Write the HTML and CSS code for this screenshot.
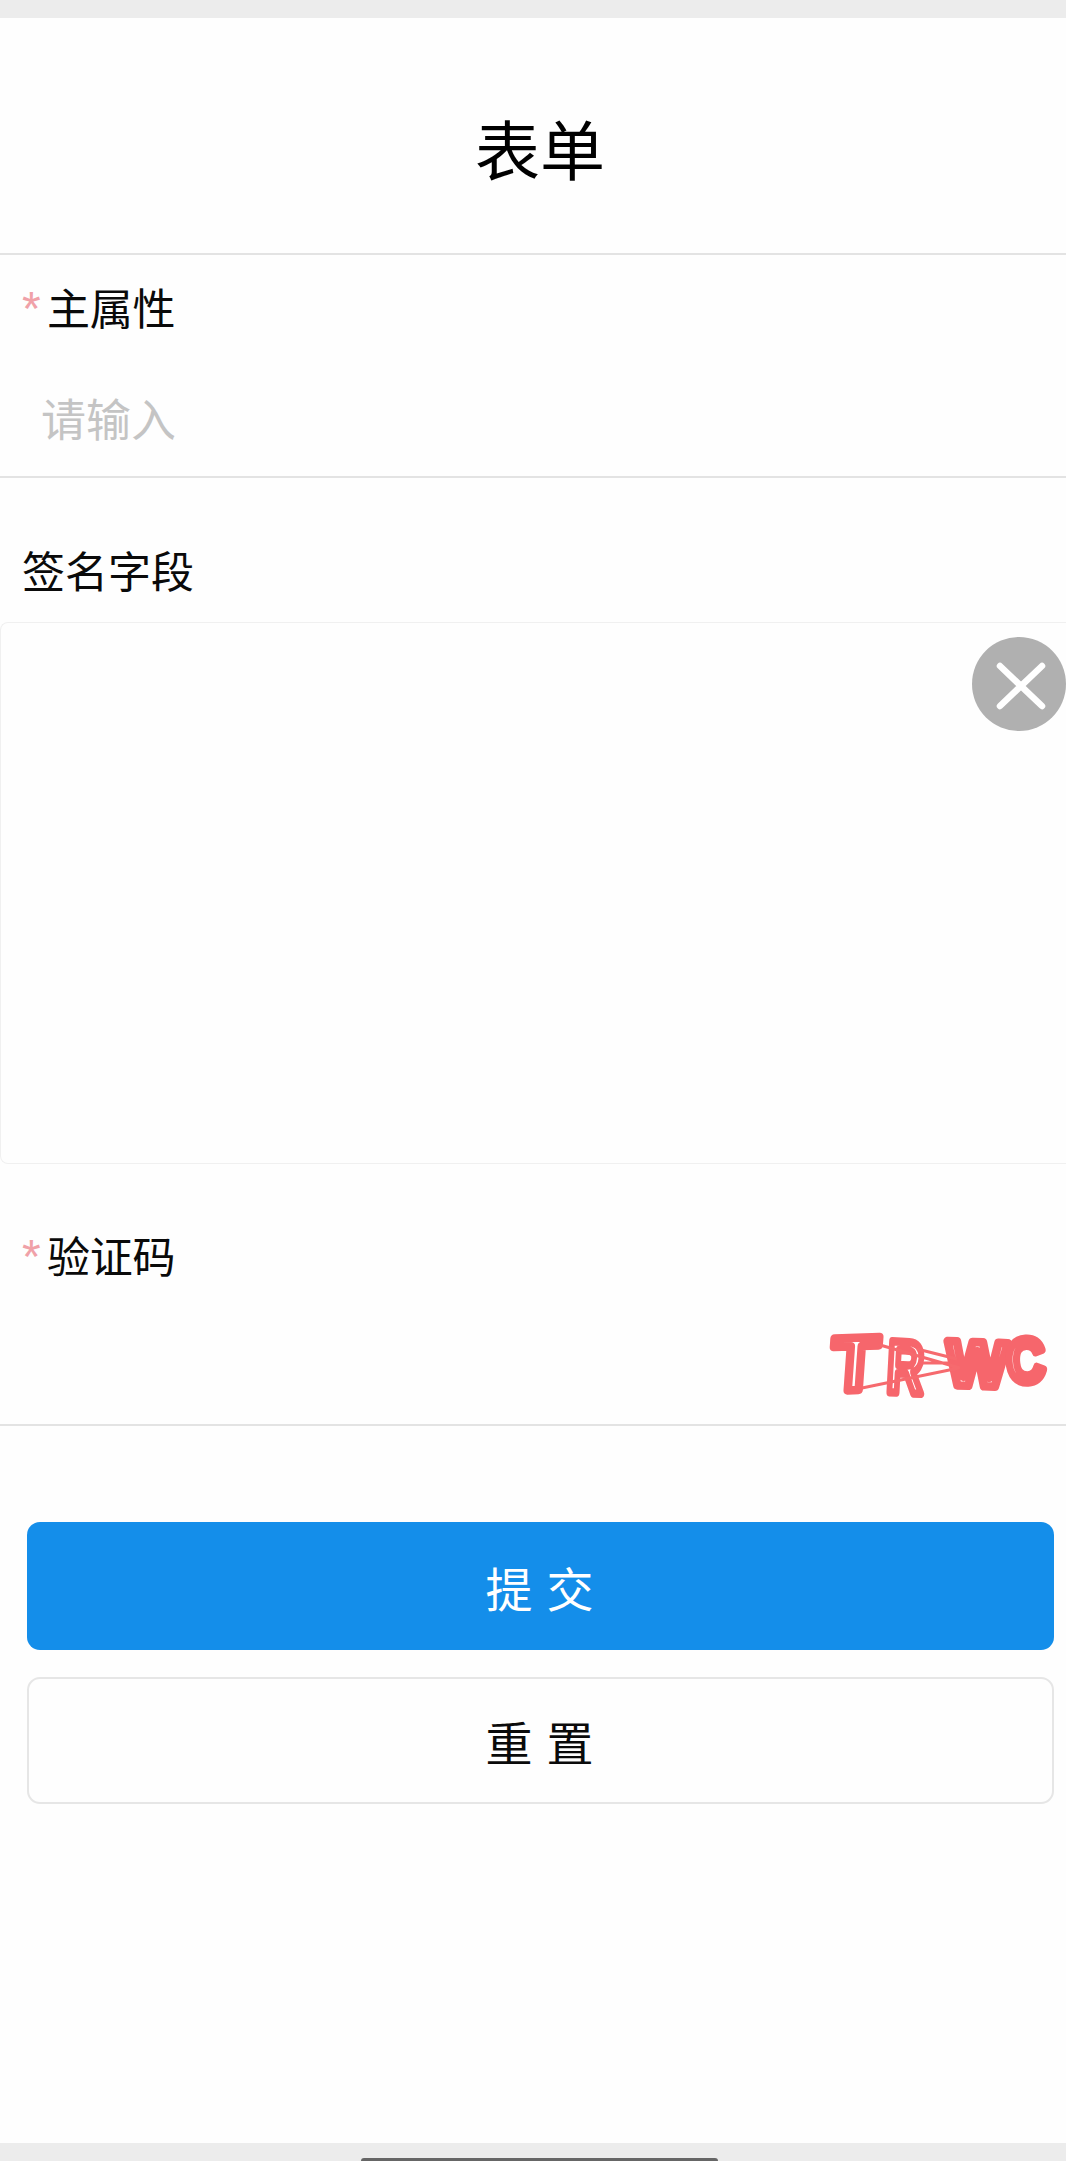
FILE: index.html
```html
<!DOCTYPE html>
<html lang="zh-CN">
<head>
<meta charset="utf-8">
<title>表单</title>
<link rel="stylesheet" href="styles.css">
</head>
<body>
<div class="phone">
  <div class="status-strip"></div>
  <header class="page-title"><h1>表单</h1></header>
  <main class="form">
    <section class="field field-main">
      <label class="field-label" for="attr"><span class="req">*</span>主属性</label>
      <input id="attr" class="text-input" type="text" placeholder="请输入">
    </section>
    <section class="sign">
      <div class="sign-label">签名字段</div>
      <div class="sign-pad">
        <button class="sign-clear" type="button" aria-label="清除">
          <svg viewBox="0 0 94 94" width="94" height="94"><path d="M28 29 L70 69 M70 29 L28 69" stroke="#fff" stroke-width="6.5" stroke-linecap="round" fill="none"/></svg>
        </button>
      </div>
    </section>
    <section class="field field-code">
      <label class="field-label"><span class="req">*</span>验证码</label>
      <div class="captcha-row">
        <svg class="captcha" viewBox="0 0 221 66" width="221" height="66" role="img" aria-label="TRWC">
          <g class="captcha-text">
            <text transform="translate(3 58) rotate(-2) skewX(-6)" font-size="76">T</text>
            <text transform="translate(59 59) rotate(3) scale(.68 1)" font-size="74">R</text>
            <text transform="translate(119 52) rotate(2)" font-size="64">W</text>
            <text transform="translate(181 50) rotate(-3) scale(.84 1)" font-size="62">C</text>
          </g>
          <g class="captcha-lines">
            <path d="M53 12 L133 35 M35 55 L132 35 M90 16 L130 26 M96 30 L122 30"/>
          </g>
        </svg>
      </div>
    </section>
    <div class="actions">
      <button class="btn btn-primary" type="button">提交</button>
      <button class="btn btn-ghost" type="button">重置</button>
    </div>
  </main>
  <div class="home-strip"><div class="home-bar"></div></div>
</div>
</body>
</html>
```
FILE: styles.css
```css
* { box-sizing: border-box; }
html, body { margin: 0; padding: 0; }
body {
  width: 1066px;
  height: 2161px;
  overflow: hidden;
  background: #fefefe;
  font-family: "Noto Sans CJK SC", "Noto Sans", sans-serif;
  color: #0a0a0a;
}
.phone { display: flex; flex-direction: column; height: 2161px; }
.status-strip { height: 18px; background: #ececec; flex: none; }
.page-title {
  height: 237px;
  flex: none;
  display: flex;
  align-items: center;
  justify-content: center;
  padding: 22px 0 0 14px;
  border-bottom: 2px solid #e3e3e3;
}
.page-title h1 { margin: 0; font-size: 65px; font-weight: 400; line-height: 80px; color: #000; }
.form { flex: 1; display: flex; flex-direction: column; }
.field { border-bottom: 2px solid #e3e3e3; padding-left: 22px; flex: none; }
.field-main { height: 223px; padding-top: 23px; }
.field-label { display: flex; align-items: flex-start; font-size: 43px; line-height: 56px; letter-spacing: -0.3px; }
.req {
  width: 25px;
  height: 56px;
  flex: none;
  color: #f0a1a8;
  font-family: "Liberation Sans", sans-serif;
  font-size: 48px;
  line-height: 62px;
}
.text-input {
  display: block;
  margin: 53px 0 0 19px;
  padding: 0;
  width: 900px;
  height: 62px;
  border: 0;
  outline: 0;
  background: transparent;
  font: 45px/62px "Noto Sans CJK SC", sans-serif;
}
.text-input::placeholder { color: #c4c4c4; opacity: 1; }
.sign { flex: none; height: 685px; padding-top: 62px; }
.sign-label { padding-left: 22px; font-size: 43px; line-height: 58px; margin-bottom: 24px; }
.sign-pad {
  position: relative;
  height: 542px;
  border: 1px solid #f0f0f0;
  border-right: 0;
  border-radius: 8px 0 0 8px;
}
.sign-clear {
  position: absolute;
  top: 14px;
  right: 0;
  width: 94px;
  height: 94px;
  padding: 0;
  border: 0;
  border-radius: 50%;
  background: #b0b0b0;
}
.sign-clear svg { display: block; }
.field-code { height: 263px; }
.field-code .field-label { padding-top: 63px; box-sizing: content-box; }
.captcha-row { display: flex; justify-content: flex-end; padding: 51px 18px 0 0; }
.captcha { display: block; overflow: visible; }
.captcha-lines path { stroke: #f66a6e; stroke-width: 3; fill: none; }
.captcha-text text {
  font-family: "Liberation Sans", sans-serif;
  font-weight: 700;
  fill: #fff;
  stroke: #f6666c;
  stroke-width: 8.5;
  stroke-linejoin: round;
}
.actions { display: flex; flex-direction: column; gap: 27px; padding: 96px 12px 0 27px; }
.btn {
  display: block;
  width: 100%;
  height: 127px;
  padding: 0 0 0 12px;
  border-radius: 13px;
  font: 47px/1 "Noto Sans CJK SC", sans-serif;
  letter-spacing: 14px;
}
.btn-primary { background: #148eea; border: 0; color: #fff; height: 128px; }
.btn-ghost { background: #fefefe; border: 2px solid #e6e6e6; color: #0a0a0a; }
.home-strip {
  flex: none;
  height: 18px;
  background: #ececec;
  display: flex;
  justify-content: center;
  align-items: flex-end;
  padding-left: 13px;
}
.home-bar { width: 357px; height: 3px; background: #666; border-radius: 3px 3px 0 0; }
```
